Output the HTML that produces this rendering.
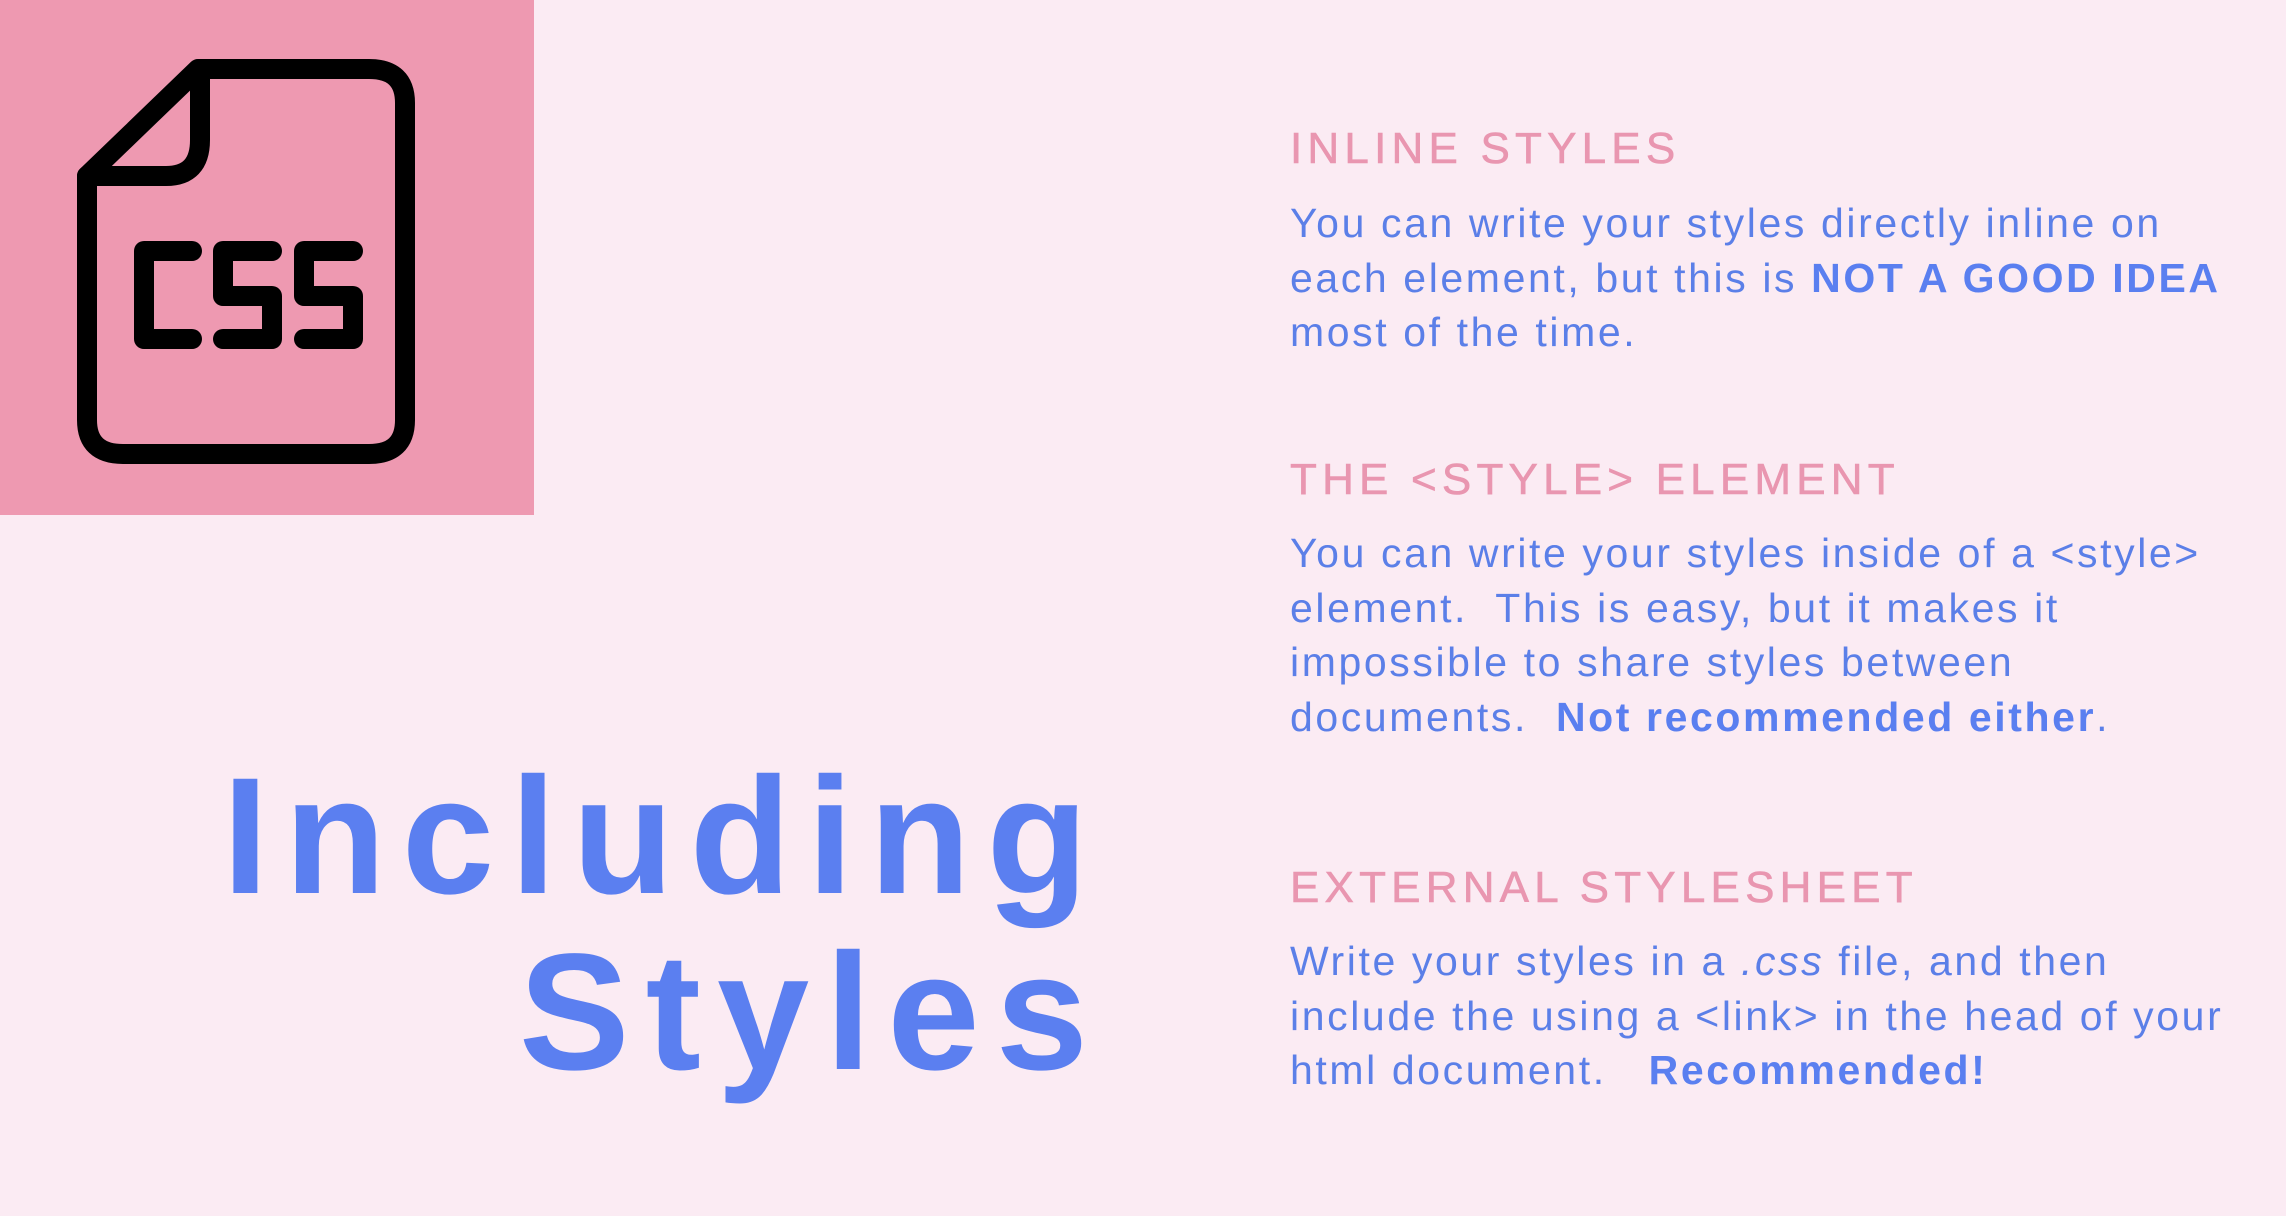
<!DOCTYPE html>
<html><head><meta charset="utf-8"><style>
html,body{margin:0;padding:0}
body{width:2286px;height:1216px;background:#fbebf3;position:relative;overflow:hidden;font-family:"Liberation Sans",sans-serif}
.box{position:absolute;left:0;top:0;width:534px;height:515px;background:#ee99b1}
.h{position:absolute;left:1290px;color:#e996b0;font-size:44px;letter-spacing:5.2px;line-height:50px;white-space:nowrap;-webkit-text-stroke:0.6px #e996b0}
.p{position:absolute;left:1290px;color:#5b7fe8;font-size:41px;letter-spacing:2.6px;line-height:54.5px;white-space:nowrap}
.p b{color:#5a7ff0}
.t{position:absolute;right:1182px;color:#5b7ff0;font-weight:bold;font-size:166px;letter-spacing:16px;line-height:176px;text-align:right;white-space:nowrap}
</style></head><body>
<div class="box">
<svg width="534" height="515" viewBox="0 0 534 515">
<g fill="none" stroke="#000" stroke-width="20" stroke-linejoin="round" stroke-linecap="round">
<path d="M87 176 L87 420 Q87 454 123 454 L369 454 Q405 454 405 420 L405 103 Q405 69 369 69 L198 69 Z"/>
<path d="M200 69 L200 140 Q200 176 166 176 L87 176"/>
<path d="M192 251 L144 251 L144 339 L192 339"/>
<path d="M272 251 L223 251 L223 296 L272 296 L272 339 L223 339"/>
<path d="M353 251 L304 251 L304 296 L353 296 L353 339 L304 339"/>
</g>
</svg>
</div>
<div class="h" style="top:124px">INLINE STYLES</div>
<div class="p" style="top:196px">You can write your styles directly inline on<br>each element, but this is <b>NOT A GOOD IDEA</b><br>most of the time.</div>
<div class="h" style="top:455px">THE &lt;STYLE&gt; ELEMENT</div>
<div class="p" style="top:526px">You can write your styles inside of a &lt;style&gt;<br>element.&nbsp; This is easy, but it makes it<br>impossible to share styles between<br>documents.&nbsp; <b>Not recommended either</b>.</div>
<div class="h" style="top:863px">EXTERNAL STYLESHEET</div>
<div class="p" style="top:934px">Write your styles in a <i>.css</i> file, and then<br>include the using a &lt;link&gt; in the head of your<br>html document.&nbsp;&nbsp; <b>Recommended!</b></div>
<div class="t" style="top:749px">Including<br>Styles</div>
</body></html>
